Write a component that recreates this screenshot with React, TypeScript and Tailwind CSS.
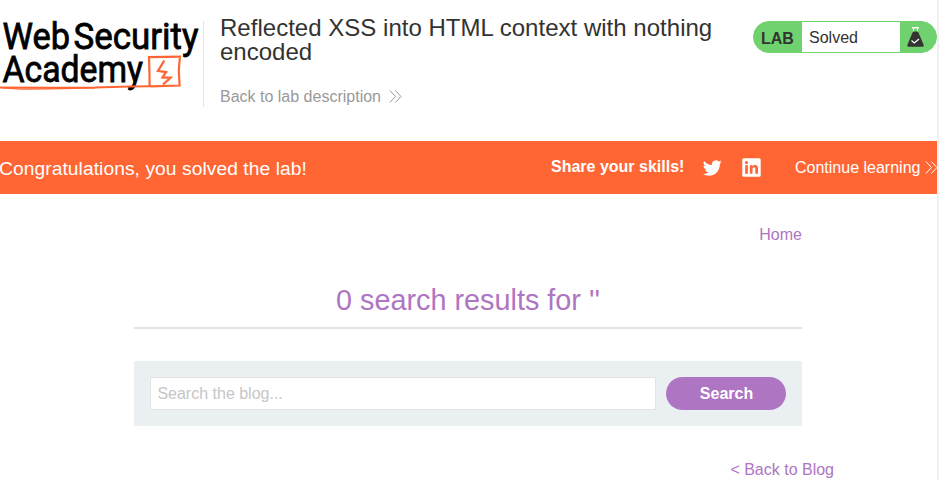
import React from "react";

function AcademyLogo() {
  return (
    <svg width="203" height="86" viewBox="0 0 203 86" className="block shrink-0 overflow-visible" role="img" aria-label="Web Security Academy">
      <g fontFamily="Roboto, 'Liberation Sans', sans-serif" fontSize="37" fontWeight="400" fill="#000" stroke="#000" strokeWidth="0.800">
        <text x="2.500" y="28.100" textLength="67.500" lengthAdjust="spacingAndGlyphs">Web</text>
        <text x="73.500" y="28.100" textLength="125" lengthAdjust="spacingAndGlyphs">Security</text>
        <text x="2.500" y="60.500" textLength="140.500" lengthAdjust="spacingAndGlyphs">Academy</text>
      </g>
      <g fill="none" stroke="#ff6633" strokeLinejoin="miter" strokeLinecap="butt">
        <path d="M149.600 66 L149.500 54 L149 36.200 L181 35.700 M180 35 L178.800 49 L179.600 64.500 L150.500 65.300" strokeWidth="2.200" />
        <path d="M0 66.600 L50 66.800 L95 66.600 L130 65.600 L150 65.200" strokeWidth="2" />
        <path d="M2 67 L22 68.200 L50 67.800 L95 66.900" strokeWidth="1.200" />
        <path d="M164.300 39.500 L158 49.800 L166 51 L162.500 56.500 L170.500 56.800 L163 63.500" strokeWidth="2.300" />
      </g>
    </svg>
  );
}

function Chevrons({ color }: { color: string }) {
  return (
    <svg width="13" height="13" viewBox="0 0 13 13" fill="none" stroke={color} strokeWidth="1" className="block shrink-0">
      <path d="M0.800 0.500 L6.500 6.500 L0.800 12.500 M6.300 0.500 L12 6.500 L6.300 12.500" />
    </svg>
  );
}

function Flask() {
  return (
    <svg width="17" height="20" viewBox="0 0 17 20" className="block shrink-0">
      <rect x="5" y="0" width="7" height="1.500" fill="#fff" />
      <path d="M6.500 1.500 V5 M10.500 1.500 V5" stroke="#fff" strokeWidth="1" />
      <path d="M6 4.500 H11 L16.700 18 Q17 19.700 15.600 19.700 H1.400 Q0 19.700 0.300 18 Z" fill="#333332" />
      <path d="M4.500 13.500 L7.300 16 L12 12" fill="none" stroke="#fff" strokeWidth="1.200" />
    </svg>
  );
}

function TwitterIcon() {
  return (
    <svg width="20" height="20" viewBox="0 0 24 24" fill="#fff" className="block">
      <path d="M23.643 4.937c-.835.37-1.732.62-2.675.733a4.670 4.670 0 0 0 2.048-2.578 9.300 9.300 0 0 1-2.958 1.130 4.660 4.660 0 0 0-7.938 4.250 13.229 13.229 0 0 1-9.602-4.868c-.4.690-.630 1.490-.630 2.342A4.660 4.660 0 0 0 3.960 9.824a4.647 4.647 0 0 1-2.110-.583v.06a4.660 4.660 0 0 0 3.737 4.568 4.692 4.692 0 0 1-2.104.08 4.661 4.661 0 0 0 4.352 3.234 9.348 9.348 0 0 1-5.786 1.995 9.500 9.500 0 0 1-1.112-.065 13.175 13.175 0 0 0 7.140 2.093c8.570 0 13.255-7.098 13.255-13.254 0-.2-.005-.402-.014-.602a9.470 9.470 0 0 0 2.323-2.410z" />
    </svg>
  );
}

function LinkedinIcon() {
  return (
    <svg width="19" height="19" viewBox="0 0 19 19" className="block">
      <rect x="0.300" y="0.300" width="18.400" height="18.400" rx="1.500" fill="#fff" />
      <g fill="#ff6633">
        <rect x="3.200" y="7.200" width="2.700" height="8.600" />
        <circle cx="4.500" cy="4.500" r="1.600" />
        <path d="M7.800 7.200h2.500v1.200c.5-.9 1.500-1.400 2.700-1.400 2.400 0 3 1.600 3 3.900v4.900h-2.700v-4.400c0-1.200-.2-2.100-1.300-2.100-1.200 0-1.500.9-1.500 2.100v4.400H7.800z" />
      </g>
    </svg>
  );
}

export default function App() {
  return (
    <div className="flex h-[480px] w-[939px] overflow-hidden bg-white font-['Liberation_Sans',Arial,sans-serif] text-base text-[#333332]">
      <div className="w-[937px] shrink-0 overflow-hidden">
        <header className="flex h-[141px] items-start pt-[21px]">
          <AcademyLogo />
          <div className="h-[86px] w-px shrink-0 bg-[#e5e5e5]" />
          <div className="ml-4 w-[533px] shrink-0">
            <h2 className="-mt-[5px] w-[510px] text-2xl leading-6 tracking-[0.02px]">Reflected XSS into HTML context with nothing encoded</h2>
            <a className="mt-6 flex items-center gap-2 leading-[18px] text-[#999]">
              Back to lab description
              <span className="-mt-0.5">
                <Chevrons color="#999" />
              </span>
            </a>
          </div>
          <div className="flex h-8 w-[184px] shrink-0 items-stretch overflow-hidden rounded-full border border-[#70d26e] bg-[#70d26e]">
            <p className="w-12 pl-[7px] pt-px text-base font-bold leading-[31px]">LAB</p>
            <p className="w-[98px] bg-white pl-[7px] pt-px leading-[30px]">Solved</p>
            <span className="flex pl-[7px] pt-[5px]">
              <Flask />
            </span>
          </div>
        </header>

        <section className="flex h-[53px] items-center bg-[#ff6633] text-white">
          <h4 className="-ml-px w-[552px] shrink-0 whitespace-nowrap pt-[2px] text-[19.2px] leading-6 tracking-[0.08px]">Congratulations, you solved the lab!</h4>
          <span className="w-[151px] shrink-0 whitespace-nowrap pb-[2px] font-bold">Share your skills!</span>
          <span className="w-10 shrink-0">
            <TwitterIcon />
          </span>
          <span className="w-[53px] shrink-0">
            <LinkedinIcon />
          </span>
          <a className="flex shrink-0 items-center gap-[5px] whitespace-nowrap">
            Continue learning
            <Chevrons color="#fff" />
          </a>
        </section>

        <main className="ml-[134px] w-[668px] text-[#ae75c2]">
          <nav className="flex justify-end pt-8 leading-[18px]">
            <a>Home</a>
          </nav>
          <h1 className="mt-[38px] h-[47px] border-b-2 border-[#e4e4e4] text-center text-[28.800px] leading-9">0 search results for ''</h1>
          <form className="mt-8 flex h-[65px] gap-[10px] bg-[#eaeff2] p-4">
            <input
              className="h-[33px] w-[506px] border border-[#e4e4e4] bg-white pl-[6.400px] text-base outline-none placeholder:text-[#c6c6c6]"
              placeholder="Search the blog..."
            />
            <button type="button" className="h-[33px] w-[120px] rounded-full bg-[#ae75c2] pl-px font-bold text-white">
              Search
            </button>
          </form>
          <div className="-mr-8 mt-[35px] flex justify-end leading-[18px]">
            <a>&lt; Back to Blog</a>
          </div>
        </main>
      </div>
      <div className="w-0.5 shrink-0 bg-[#f0f0f0]" />
    </div>
  );
}
